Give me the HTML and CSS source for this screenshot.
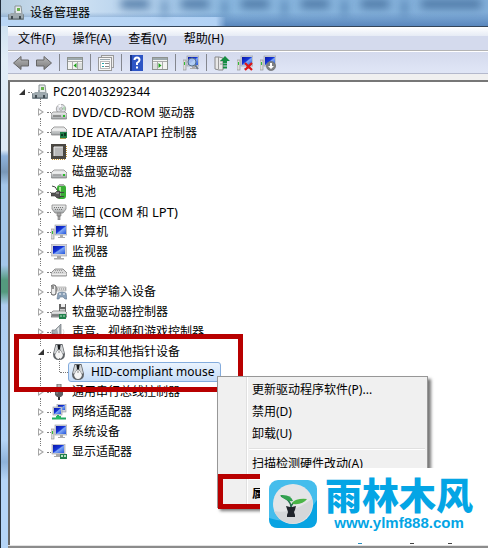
FILE: index.html
```html
<!DOCTYPE html>
<html lang="zh-CN">
<head>
  <meta charset="UTF-8">
  <meta name="viewport" content="width=device-width, initial-scale=1.0">
  <title>设备管理器</title>
  <link rel="stylesheet" href="styles.css">
</head>
<body>
  <!-- shared icon shapes -->
  <svg class="defs" width="0" height="0">
    <defs>
      <linearGradient id="screen" x1="0" y1="0" x2="1" y2="1">
        <stop offset="0" stop-color="#0a17a8"/><stop offset=".45" stop-color="#1536d8"/><stop offset=".55" stop-color="#7fa6f5"/><stop offset="1" stop-color="#2456dc"/>
      </linearGradient>
      <linearGradient id="metal" x1="0" y1="0" x2="0" y2="1">
        <stop offset="0" stop-color="#f4f4f4"/><stop offset="1" stop-color="#a2a6a8"/>
      </linearGradient>
      <linearGradient id="grey" x1="0" y1="0" x2="0" y2="1">
        <stop offset="0" stop-color="#b8b8b8"/><stop offset="1" stop-color="#7b7b7b"/>
      </linearGradient>
    </defs>
    <symbol id="i-pc" viewBox="0 0 16 16">
      <path d="M7 1h6l1 8H7z" fill="#e8ecec" stroke="#8a9294"/><path d="M9 3h3v3H9z" fill="#67b34c"/>
      <path d="M3 8h3V6h2v2h5l2 2H1z" fill="#9ba5aa"/><rect x="0" y="9" width="16" height="6" rx="1" fill="#78858c"/><path d="M1 10h14M1 12h14" stroke="#c5ced2"/><path d="M3 11h2v3H3zM11 11h2v3h-2z" fill="#414c52"/>
    </symbol>
    <symbol id="i-drive" viewBox="0 0 16 16">
      <path d="M3 6h10l3 3v4q0 1-1 1H1q-1 0-1-1V9z" fill="url(#metal)" stroke="#777" stroke-width=".7"/><path d="M1 9h14" stroke="#fff"/><path d="M2 11h8" stroke="#8b8b8b"/><rect x="12" y="10" width="2" height="2" fill="#28b928"/>
    </symbol>
    <symbol id="i-dvd" viewBox="0 0 16 16">
      <circle cx="10" cy="5" r="4.7" fill="#dedfe5" stroke="#888" stroke-width=".7"/><path d="M10 5l4-3v4z" fill="#b2d7b5"/><path d="M10 5L7 1l3-1z" fill="#fff"/><circle cx="10" cy="5" r="1.3" fill="#fff" stroke="#777" stroke-width=".6"/>
      <path d="M2 8h12l2 2v4q0 1-1 1H1q-1 0-1-1v-4z" fill="url(#metal)" stroke="#777" stroke-width=".7"/><path d="M2 12h8" stroke="#555"/><rect x="12" y="11" width="2" height="2" fill="#28b928"/>
    </symbol>
    <symbol id="i-ide" viewBox="0 0 16 16">
      <path d="M3 3h10l3 3v4q0 1-1 1H1q-1 0-1-1V6z" fill="url(#metal)" stroke="#777" stroke-width=".7"/><path d="M1 6h14" stroke="#fff"/>
      <path d="M9 8h7v6H9z" fill="#21804b"/><path d="M10 10h2v2h-2zM13 9h2v3h-2z" fill="#0d3820"/><path d="M9 14.500h6" stroke="#b0a34b"/>
    </symbol>
    <symbol id="i-cpu" viewBox="0 0 16 16">
      <path d="M1 15.500h13M15.500 2v12" stroke="#c79431" stroke-width="1" stroke-dasharray="1 1"/><rect x="0" y="0" width="15" height="15" fill="#4a4742"/><rect x="3" y="3" width="9" height="9" fill="#b9b9b9"/><path d="M3 12V3h9" stroke="#eee" fill="none"/>
    </symbol>
    <symbol id="i-battery" viewBox="0 0 16 16">
      <rect x="6" y="1" width="9" height="14" rx="3" fill="#39ad35"/><rect x="8" y="0" width="5" height="2" fill="#aaa"/><path d="M9 3v10" stroke="#a6eb93" stroke-width="2"/>
      <path d="M1 2q4 0 5 4" stroke="#444" fill="none"/><path d="M0 9h4l2-2h3v7H6l-2-2H0z" fill="#555" stroke="#333" stroke-width=".6"/><path d="M9 8.500h4M9 12.500h4" stroke="#444"/><path d="M5 9h3" stroke="#bbb"/>
    </symbol>
    <symbol id="i-port" viewBox="0 0 16 16">
      <path d="M1 1h14v4l-3 4H4L1 5z" fill="url(#metal)" stroke="#858585" stroke-width=".8"/><path d="M3 3.500h10M4 5.500h8" stroke="#777" stroke-dasharray="1 1"/><path d="M6 9h4v3H6zM7 12h2v4H7z" fill="#aaa" stroke="#777" stroke-width=".6"/>
    </symbol>
    <symbol id="i-computer" viewBox="0 0 16 16">
      <rect x="4" y="1" width="12" height="10" fill="#d3d6dc" stroke="#9297a0" stroke-width=".6"/><rect x="5" y="2" width="10" height="8" fill="url(#screen)"/><path d="M9 11h3v2h2v1H7v-1h2z" fill="#aaa"/>
      <rect x="0" y="5" width="3" height="10" fill="#ddd" stroke="#888" stroke-width=".6"/><path d="M1 7h1v3H1z" fill="#30bd36"/>
    </symbol>
    <symbol id="i-monitor" viewBox="0 0 16 16">
      <rect x="0" y="0" width="16" height="12" fill="#d4d5da" stroke="#9a9ca2" stroke-width=".6"/><rect x="2" y="2" width="12" height="8" fill="url(#screen)"/><path d="M6 12h4v2h3v1.500H3V14h3z" fill="#a9a9a9"/>
    </symbol>
    <symbol id="i-keyboard" viewBox="0 0 16 16">
      <path d="M4 5h8l4 4v2q0 1-1 1H1q-1 0-1-1V9z" fill="#d9d9d9" stroke="#686868" stroke-width=".7"/><path d="M4 6.500h8M3 8.500h10" stroke="#999" stroke-dasharray="1 1"/><path d="M1 10.500h14" stroke="#eee"/>
    </symbol>
    <symbol id="i-hid" viewBox="0 0 16 16">
      <path d="M5 3h10v4H5z" fill="#ddd" stroke="#999" stroke-width=".6"/><path d="M6 5h9" stroke="#888" stroke-dasharray="1 1"/><rect x="0" y="1" width="5" height="10" rx="2" fill="#eee" stroke="#555"/><path d="M2 2v3" stroke="#333"/>
      <path d="M7 9q4-2 8 0l1 6h-2l-2-2H9l-1 2H6z" fill="#8ba1b8" stroke="#647a92" stroke-width=".6"/><path d="M8 10h2M12 10h2" stroke="#fff"/>
    </symbol>
    <symbol id="i-floppy" viewBox="0 0 16 16">
      <path d="M8 0h7v8H8z" fill="#666"/><path d="M10 0h4v3h-4z" fill="#eee"/><path d="M9 5h5v3H9z" fill="#ccc"/><path d="M2 7h12l2 2v4H0V9z" fill="url(#metal)" stroke="#666" stroke-width=".7"/><path d="M1 11h7" stroke="#444"/><path d="M8 10h7v5H8z" fill="#21804b"/><path d="M9 12h2M12 12h2" stroke="#b9e3c6"/>
    </symbol>
    <symbol id="i-sound" viewBox="0 0 16 16">
      <path d="M1 6h3l6-6v15l-6-5H1z" fill="#a4abb0" stroke="#737a80" stroke-width=".7"/><path d="M6 5l2-2v9" fill="#e2e5e7"/><path d="M12 5q2 3 0 6" stroke="#ccc" fill="none" stroke-width=".7"/>
    </symbol>
    <symbol id="i-mouse" viewBox="0 0 16 16">
      <path d="M5 0h6q1 0 1 2l2 8q0 6-6 6t-6-6l2-8q0-2 1-2z" fill="#606468"/>
      <path d="M8 6q2 0 3 3l1 2q-1 4-4 4t-4-4l1-2q1-3 3-3z" fill="#f5f5f5"/>
      <path d="M5 1h1l1 4-3 5-1-1zM11 1h-1L9 5l3 5 1-1z" fill="#d3d6d8"/><path d="M7 1h2v4H7z" fill="#17191b"/><circle cx="8" cy="8" r="1" fill="#aaa"/>
    </symbol>
    <symbol id="i-usb" viewBox="0 0 16 16">
      <path d="M6 0h4v4H6z" fill="#bbb" stroke="#777"/><path d="M4 4h8v7l-2 2H6l-2-2z" fill="#5e6164"/><path d="M7 13h2v3H7z" fill="#333"/><path d="M6 5v5" stroke="#999"/>
    </symbol>
    <symbol id="i-network" viewBox="0 0 16 16">
      <rect x="6" y="0" width="9" height="8" fill="#d2d5dc" stroke="#90949e" stroke-width=".6"/><rect x="7" y="1" width="7" height="5" fill="url(#screen)"/><rect x="2" y="3" width="9" height="8" fill="#d2d5dc" stroke="#90949e" stroke-width=".6"/><rect x="3" y="4" width="7" height="6" fill="url(#screen)"/>
      <path d="M7 11v3M1 14.500h14" stroke="#22a861" stroke-width="2"/><path d="M5 12h5v3H5z" fill="#25ba61"/>
    </symbol>
    <symbol id="i-display" viewBox="0 0 16 16">
      <rect x="1" y="0" width="13" height="10" fill="#d4d5da" stroke="#9a9ca2" stroke-width=".6"/><rect x="2" y="1" width="11" height="8" fill="url(#screen)"/><path d="M5 10h4v2h2v1H3v-1h2z" fill="#aaa"/><path d="M9 10h7v5H9z" fill="#21804b"/><path d="M10 11h2v2h-2zM13 11h2v2h-2z" fill="#b9e3c6"/>
    </symbol>
    <symbol id="i-back" viewBox="0 0 16 16">
      <path d="M.500 8L8 1.500V5h7.500v6H8v3.500z" fill="url(#grey)" stroke="#666"/>
    </symbol>
    <symbol id="i-pane" viewBox="0 0 16 16">
      <rect x=".500" y="2.500" width="15" height="12" fill="#f3f4f2" stroke="#8d928f"/><path d="M1 4h14" stroke="#9da9ad" stroke-width="2"/><path d="M1 6.500h14M5.500 7v7M10.500 7v7" stroke="#aaa"/><path d="M11 9h4M11 11h4M11 13h4" stroke="#b7bfc2" stroke-width=".8"/><path d="M9.500 8v5L6.500 10.500z" fill="#20a01c"/>
    </symbol>
    <symbol id="i-props" viewBox="0 0 16 16">
      <rect x="3.500" y=".500" width="12" height="12" fill="#eee" stroke="#999"/><rect x=".500" y="2.500" width="13" height="13" fill="#f7f7f7" stroke="#999"/><path d="M2 4.500h10" stroke="#9aa7b0"/><rect x="2.500" y="6.500" width="9" height="7" fill="#fff" stroke="#bbb"/><path d="M4 8.500h2M4 11.500h2" stroke="#26a4a9"/><path d="M7 8.500h4M7 11.500h4" stroke="#888"/>
    </symbol>
    <symbol id="i-help" viewBox="0 0 16 16">
      <rect x="1" y="0" width="13" height="16" fill="#2d55c5"/><path d="M2 0v16" stroke="#1a3488" stroke-width="2"/><path d="M5.500 5q0-2.500 2.500-2.500T10.500 5q0 1.500-2.500 3v2" fill="none" stroke="#fff" stroke-width="2"/><path d="M7 11.500h2v2H7z" fill="#fff"/>
    </symbol>
    <symbol id="i-scan" viewBox="0 0 16 16">
      <use href="#i-computer"/><circle cx="9" cy="7" r="4" fill="#c4dcf4" fill-opacity=".8" stroke="#55718f"/><path d="M12 10l3 4" stroke="#6d7b88" stroke-width="2"/>
    </symbol>
    <symbol id="i-update" viewBox="0 0 16 16">
      <path d="M1 2h4l4 1v12H5l-4-1z" fill="#e8e8e8" stroke="#888"/><path d="M4.500 2v12M6 6h3M6 9h3" stroke="#999"/><path d="M11 1l5 5h-3v2H9V6H6z" fill="#168c43"/><path d="M9 9.500h4M9 12.500h4" stroke="#168c43" stroke-width="2"/>
    </symbol>
    <symbol id="i-remove" viewBox="0 0 16 16">
      <use href="#i-computer"/><path d="M8 8l7 7M15 8l-7 7" stroke="#df1717" stroke-width="2.200"/>
    </symbol>
    <symbol id="i-disable" viewBox="0 0 16 16">
      <use href="#i-computer"/><circle cx="11" cy="11" r="4.600" fill="#7e8082" stroke="#66686a" stroke-width=".6"/><path d="M10 8h2v3h2l-3 3-3-3h2z" fill="#fff"/>
    </symbol>
  </svg>

  <div class="window">
    <header class="titlebar">
      <div class="glass"><i></i><i></i><i></i><i></i><i></i><i class="wide"></i></div>
      <svg class="icon"><use href="#i-pc"/></svg>
      <h1>设备管理器</h1>
    </header>

    <div class="frame">
      <nav class="menubar">
        <button>文件(F)</button>
        <button>操作(A)</button>
        <button>查看(V)</button>
        <button>帮助(H)</button>
      </nav>

      <div class="toolbar">
        <button aria-label="后退"><svg class="icon"><use href="#i-back"/></svg></button>
        <button aria-label="前进"><svg class="icon flip"><use href="#i-back"/></svg></button>
        <span class="sep"></span>
        <button aria-label="显示控制台树"><svg class="icon"><use href="#i-pane"/></svg></button>
        <span class="sep"></span>
        <button aria-label="属性"><svg class="icon"><use href="#i-props"/></svg></button>
        <span class="sep"></span>
        <button aria-label="帮助"><svg class="icon"><use href="#i-help"/></svg></button>
        <button aria-label="显示操作窗格"><svg class="icon flip"><use href="#i-pane"/></svg></button>
        <span class="sep"></span>
        <button aria-label="扫描"><svg class="icon"><use href="#i-scan"/></svg></button>
        <span class="sep"></span>
        <button aria-label="更新"><svg class="icon"><use href="#i-update"/></svg></button>
        <button aria-label="卸载"><svg class="icon"><use href="#i-remove"/></svg></button>
        <button aria-label="禁用"><svg class="icon"><use href="#i-disable"/></svg></button>
      </div>

      <main class="content">
        <ul class="tree">
          <li>
            <div class="row open"><svg class="icon"><use href="#i-pc"/></svg><span>PC201403292344</span></div>
            <ul>
              <li><div class="row closed"><svg class="icon"><use href="#i-dvd"/></svg><span><span class="latin">DVD/CD-ROM </span>驱动器</span></div></li>
              <li><div class="row closed"><svg class="icon"><use href="#i-ide"/></svg><span><span class="latin">IDE ATA/ATAPI </span>控制器</span></div></li>
              <li><div class="row closed"><svg class="icon"><use href="#i-cpu"/></svg><span>处理器</span></div></li>
              <li><div class="row closed"><svg class="icon"><use href="#i-drive"/></svg><span>磁盘驱动器</span></div></li>
              <li><div class="row closed"><svg class="icon"><use href="#i-battery"/></svg><span>电池</span></div></li>
              <li><div class="row closed"><svg class="icon"><use href="#i-port"/></svg><span>端口<span class="latin"> (COM </span>和<span class="latin"> LPT)</span></span></div></li>
              <li><div class="row closed"><svg class="icon"><use href="#i-computer"/></svg><span>计算机</span></div></li>
              <li><div class="row closed"><svg class="icon"><use href="#i-monitor"/></svg><span>监视器</span></div></li>
              <li><div class="row closed"><svg class="icon"><use href="#i-keyboard"/></svg><span>键盘</span></div></li>
              <li><div class="row closed"><svg class="icon"><use href="#i-hid"/></svg><span>人体学输入设备</span></div></li>
              <li><div class="row closed"><svg class="icon"><use href="#i-floppy"/></svg><span>软盘驱动器控制器</span></div></li>
              <li><div class="row closed"><svg class="icon"><use href="#i-sound"/></svg><span>声音、视频和游戏控制器</span></div></li>
              <li>
                <div class="row open"><svg class="icon"><use href="#i-mouse"/></svg><span>鼠标和其他指针设备</span></div>
                <ul>
                  <li><div class="row leaf"><div class="selected"><svg class="icon"><use href="#i-mouse"/></svg><span>HID-compliant mouse</span></div></div></li>
                </ul>
              </li>
              <li><div class="row closed"><svg class="icon"><use href="#i-usb"/></svg><span>通用串行总线控制器</span></div></li>
              <li><div class="row closed"><svg class="icon"><use href="#i-network"/></svg><span>网络适配器</span></div></li>
              <li><div class="row closed"><svg class="icon"><use href="#i-computer"/></svg><span>系统设备</span></div></li>
              <li><div class="row closed"><svg class="icon"><use href="#i-display"/></svg><span>显示适配器</span></div></li>
            </ul>
          </li>
        </ul>
      </main>
    </div>

    <div class="mark mark-device"></div>

    <div class="context-menu">
      <button>更新驱动程序软件(P)...</button>
      <button>禁用(D)</button>
      <button>卸载(U)</button>
      <hr>
      <button>扫描检测硬件改动(A)</button>
      <hr>
      <button class="default">属性(R)</button>
    </div>

    <div class="mark mark-props"></div>

    <div class="watermark">
      <svg class="logo" viewBox="0 0 48 48">
        <rect width="48" height="48" rx="9" fill="#45bdec"/>
        <path d="M0 38Q30 48 48 20v19q0 9-9 9H9q-9 0-9-9z" fill="#08a3e2"/>
        <circle cx="24" cy="24" r="20" fill="#e4e5e7"/>
        <path d="M5 31q16 4 38-12a20 20 0 0 1-38 12z" fill="#d5d7d9"/>
        <path d="M22 27Q22 20 12 16M22 27q1-5 7-6" fill="none" stroke="#25704c" stroke-width="1.500"/>
        <path d="M11 15q11-1 13 6-7 1-13-6z" fill="#31a14f"/><path d="M23 23q4-5 15-4-4 6-14 5z" fill="#4ab546"/>
        <path d="M17 26l4 1h2l4-1-1 4-1 2 1 3v2h-8v-2l1-3z" fill="#20242b"/>
      </svg>
      <div class="brand">
        <strong>雨林木风</strong>
        <span>www.ylmf888.com</span>
      </div>
    </div>
    <div class="scraps"><i></i><i></i><i></i></div>
  </div>
</body>
</html>
```
FILE: styles.css
```css
* {
  box-sizing: border-box;
}

body {
  margin: 0;
  font: 12px/20px "Noto Sans", "Noto Sans CJK SC", sans-serif;
  color: #000;
}

ul {
  list-style: none;
  margin: 0;
  padding: 0;
}

button {
  border: 0;
  padding: 0;
  background: none;
  font: inherit;
  color: inherit;
}

.defs {
  position: absolute;
}

.icon {
  display: block;
  flex: none;
  width: 16px;
  height: 16px;
}

.flip {
  transform: scaleX(-1);
}

.latin {
  font-size: 13px;
}

.window {
  position: relative;
  display: flex;
  flex-direction: column;
  min-height: 100vh;
  overflow: hidden;
  padding-left: 7px;
  border-left: 1px solid #202c3a;
  background: linear-gradient(#c2d9ec 0, #e1edf7 60px, #dce9f6 150px, #8fb3dc 156px, #7897b8 172px, #a4c6ea 185px, #a4c6ea 265px, #549a7e 280px, #549a7e 292px, #aecdf0 305px, #b5d5f7 440px, #8eb2d9 462px, #b5d5f7 480px);
}

/* title bar */
.titlebar {
  position: relative;
  display: flex;
  align-items: center;
  gap: 6px;
  height: 26px;
  margin-left: -7px;
  padding-left: 7px;
  background: linear-gradient(to right, #b6cde0, #d0e2f3 70px, #b3d0ec 140px, #8ab7df 230px, #82aed9);
}

.titlebar h1 {
  position: relative;
  margin: 0;
  font-size: 12px;
  font-weight: normal;
}

.titlebar .icon {
  position: relative;
}

/* blurred page behind the glass */
.glass {
  position: absolute;
  inset: 0;
  display: flex;
  gap: 32px;
  overflow: hidden;
  padding-left: 120px;
  background:
    linear-gradient(to right, #b9d6f5 90px, #b2d2f5 215px, transparent 225px) 0 100% / 100% 9px no-repeat,
    linear-gradient(transparent 12px, #5a87bd);
}

.glass i {
  flex: none;
  width: 28px;
  height: 8px;
  background: #48729f;
  filter: blur(4px);
}

.glass i::after {
  content: "";
  display: block;
  width: 3px;
  height: 15px;
  margin-left: 42px;
  background: #2f5f93;
}

.glass .wide {
  width: 60px;
}

.glass .wide::after {
  display: none;
}

.frame {
  flex: 1;
  display: flex;
  flex-direction: column;
  border-top: 1px solid #344559;
  background: #f0f0f0;
}

/* menu and tool bars */
.menubar {
  display: flex;
  gap: 17px;
  height: 24px;
  padding-left: 10px;
  border-bottom: 1px solid #b4b4b4;
  background: linear-gradient(#fff, #e6ebf5 9px, #d4daed 9px, #d4daed);
}

.toolbar {
  display: flex;
  align-items: center;
  gap: 7px;
  height: 23px;
  padding-left: 5px;
  border-top: 1px solid #fff;
  border-bottom: 1px solid #b4b9cc;
  background: linear-gradient(#d4daed, #e0e6f6);
}

.toolbar .sep {
  width: 1px;
  height: 17px;
  background: #84878f;
}

/* device tree */
.content {
  flex: 1;
  margin: 6px 0 3px;
  padding-left: 9px;
  border: solid #696969;
  border-width: 2px 0 0 2px;
  border-top-color: #777;
  background: #fff;
  box-shadow: 0 1px #e3e3e3, 0 3px #8c8c8c;
}

.tree ul {
  position: relative;
  padding-left: 19px;
}

.row {
  position: relative;
  display: flex;
  align-items: center;
  gap: 5px;
  height: 20px;
  padding-left: 13px;
  white-space: nowrap;
}

.row::before {
  content: "";
  position: absolute;
  left: 0;
  top: 6px;
  width: 7px;
  height: 8px;
}

.closed::before {
  background: #a6a6a6;
  clip-path: polygon(evenodd, 0 0, 6px 4px, 0 8px, 0 0, 1px 2px, 1px 6px, 4px 4px, 1px 2px);
}

.open::before {
  background: #333;
  clip-path: polygon(6px 1px, 6px 7px, 0 7px);
}

.row::after {
  content: "";
  position: absolute;
  left: 9px;
  top: 10px;
  width: 4px;
  border-top: 1px dotted #777;
}

.tree ul > li {
  position: relative;
}

.tree ul > li::before {
  content: "";
  position: absolute;
  left: 2px;
  top: -4px;
  height: 8px;
  border-left: 1px dotted #777;
}

.tree ul ul::before {
  content: "";
  position: absolute;
  left: 2px;
  top: -4px;
  height: 20px;
  border-left: 1px dotted #777;
}

.tree ul ul > li::before {
  height: 14px;
}

.leaf::after {
  left: 3px;
  width: 8px;
}

.selected {
  display: flex;
  align-items: center;
  gap: 5px;
  height: 20px;
  margin-left: -2px;
  padding: 0 6px 0 1px;
  border: 1px solid #84acdd;
  border-radius: 3px;
  background: linear-gradient(#eaf3fd, #c5dcf8);
}

/* right-click menu */
.context-menu {
  position: absolute;
  left: 216px;
  top: 376px;
  display: flex;
  flex-direction: column;
  width: 211px;
  padding: 2px;
  border: 1px solid #979797;
  background: linear-gradient(to right, transparent 28px, #e0e0e0 28px, #e0e0e0 29px, #fff 29px, #fff 30px, transparent 30px) #f0f0f0;
  box-shadow: 3px 3px 3px #777;
}

.context-menu button {
  height: 22px;
  padding-left: 32px;
  text-align: left;
}

.context-menu hr {
  width: 176px;
  height: 2px;
  margin: 3px 0 3px auto;
  border: 0;
  border-top: 1px solid #e0e0e0;
  background: #fff;
}

.context-menu .default {
  font-weight: bold;
}

/* red frames that point out the steps */
.mark {
  position: absolute;
  border: 5px solid #b80000;
}

.mark-device {
  left: 13px;
  top: 334px;
  width: 229px;
  height: 58px;
}

.mark-props {
  left: 217px;
  top: 474px;
  width: 100px;
  height: 35px;
}

/* site badge */
.watermark {
  position: absolute;
  left: 259px;
  right: 0;
  top: 468px;
  display: flex;
  gap: 8px;
  height: 74px;
  padding: 8px 0 0 9px;
  background: #fff;
}

.logo {
  flex: none;
  width: 48px;
  height: 48px;
  margin-top: 4px;
}

.brand {
  display: flex;
  flex-direction: column;
  align-items: center;
  gap: 3px;
  color: #04a5e5;
  white-space: nowrap;
}

.brand strong {
  font: 900 37px/36px "Noto Sans CJK SC", sans-serif;
}

.brand span {
  font: bold 15px/16px "Liberation Sans", sans-serif;
}

.scraps {
  position: absolute;
  left: 357px;
  top: 543px;
  display: flex;
  gap: 48px;
}

.scraps i {
  width: 4px;
  height: 1px;
  background: #444;
}

.scraps i:first-child {
  background: #2a8fc0;
}

.scraps i + i + i {
  margin-left: -14px;
}
```
